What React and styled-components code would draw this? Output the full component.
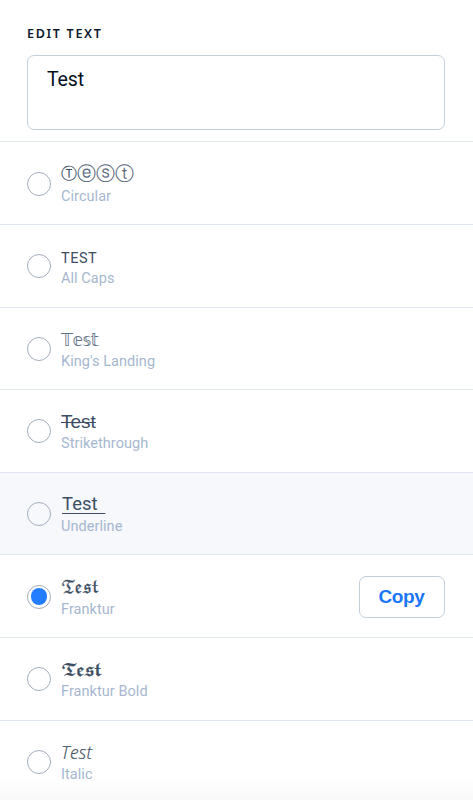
import React, { useState } from "react";
import styled, { createGlobalStyle, css } from "styled-components";

const GlobalStyle = createGlobalStyle`
  * {
    box-sizing: border-box;
  }

  body {
    margin: 0;
    background: #fff;
    font-family: Roboto, "Liberation Sans", sans-serif;
  }
`;

const Panel = styled.main`
  width: 100%;
  height: 800px;
  overflow: hidden;
  background: #fff;
`;

const Editor = styled.section`
  display: flex;
  flex-direction: column;
  height: 142.4px;
  padding: 25px 28.5px 0 27px;
  border-bottom: 1px solid #e0e8f2;
`;

const EditorLabel = styled.label`
  height: 30px;
  color: #0b1a2e;
  font-family: "Noto Sans", sans-serif;
  font-size: 12.5px;
  font-weight: 600;
  line-height: 17px;
  letter-spacing: 1.7px;
`;

const TextArea = styled.textarea`
  display: block;
  width: 100%;
  height: 74.5px;
  padding: 11px 19px;
  border: 1.5px solid #c4cfdc;
  border-radius: 7px;
  outline: none;
  resize: none;
  background: #fff;
  color: #06101f;
  font-family: Roboto, sans-serif;
  font-size: 19.5px;
  line-height: 25px;
  letter-spacing: -0.1px;
`;

const Row = styled.div`
  display: flex;
  align-items: center;
  height: 82.6px;
  padding: 1px 28.5px 0 27px;
  border-bottom: 1px solid #dfe6f1;
  background: ${(props) => (props.$hovered ? "#f6f8fc" : "transparent")};
`;

const List = styled.section`
  height: 658px;
  overflow: hidden;
  background: linear-gradient(#fff 635px, #f9f9f9 658px);
`;

const Radio = styled.button`
  display: grid;
  place-items: center;
  flex: none;
  width: 24px;
  height: 24px;
  margin-right: 10px;
  padding: 0;
  border: 1px solid #a3adbd;
  border-radius: 50%;
  background: #fff0;

  &::after {
    content: "";
    width: 16.5px;
    height: 16.5px;
    border-radius: 50%;
    background: ${(props) => (props.$checked ? "#247cff" : "transparent")};
  }
`;

const Texts = styled.div`
  flex: 1;
  padding-top: 2px;
  white-space: nowrap;
`;

const variants = {
  circular: css`
    font-family: "DejaVu Sans", sans-serif;
    font-size: 19px;
    line-height: 20px;
    color: #5d6b7e;

    /* the capital has a smaller, heavier ring */
    &::first-letter {
      color: #3c4e63;
      font-size: 15.5px;
      -webkit-text-stroke: 0.5px #3c4e63;
      vertical-align: 1px;
    }
  `,
  caps: css`
    padding-top: 3px;
    font-size: 14.5px;
    letter-spacing: 0.5px;
  `,
  double: css`
    padding-top: 1px;
    font-family: "DejaVu Sans", sans-serif;
    font-size: 17px;
    letter-spacing: -0.5px;
    color: #65758a;
  `,
  strike: css`
    padding-top: 1px;
    font-family: "Liberation Sans", sans-serif;
    text-decoration: line-through;
    text-decoration-thickness: 1px;
  `,
  underline: css`
    padding-left: 1px;
    font-size: 18.5px;
    text-decoration: underline;
    text-decoration-thickness: 1px;
    text-underline-offset: 3px;
    white-space: pre;
    word-spacing: -0.7px;
  `,
  fraktur: css`
    padding-top: 1px;
    font-family: "DejaVu Math TeX Gyre", "DejaVu Sans", serif;
    font-size: 16.5px;
    letter-spacing: -1.3px;
    -webkit-text-stroke: 0.3px #3c4e63;
  `,
  frakturBold: css`
    padding-top: 2px;
    font-family: "DejaVu Math TeX Gyre", "DejaVu Sans", serif;
    font-size: 16.5px;
    letter-spacing: -1.9px;
    -webkit-text-stroke: 0.2px #3c4e63;
  `,
  italic: css`
    font-family: "Open Sans", sans-serif;
    font-size: 17.5px;
    font-style: italic;
    font-weight: 300;
    letter-spacing: 0.3px;
    -webkit-text-stroke: 0.2px #3c4e63;
  `,
};

const Sample = styled.div`
  height: 22px;
  color: #3c4e63;
  font-size: 19px;
  line-height: 22px;
  ${(props) => variants[props.$variant]}
`;

const Caption = styled.div`
  height: 22px;
  color: #a6b7cf;
  font-size: 14.5px;
  line-height: 23px;
  letter-spacing: 0.05px;
`;

const CopyButton = styled.button`
  width: 86px;
  height: 42px;
  padding: 0;
  border: 1px solid #c3cedb;
  border-radius: 7px;
  background: #fff;
  color: #1976fa;
  font-family: "Liberation Sans", sans-serif;
  font-size: 19px;
  font-weight: 700;
  letter-spacing: -0.4px;
`;

const styles = [
  { name: "Circular", sample: "Ⓣⓔⓢⓣ", variant: "circular" },
  { name: "All Caps", sample: "TEST", variant: "caps" },
  { name: "King's Landing", sample: "𝕋𝕖𝕤𝕥", variant: "double" },
  { name: "Strikethrough", sample: "Test", variant: "strike" },
  { name: "Underline", sample: "Test  ", variant: "underline", hovered: true },
  { name: "Franktur", sample: "𝔗𝔢𝔰𝔱", variant: "fraktur" },
  { name: "Franktur Bold", sample: "𝕿𝖊𝖘𝖙", variant: "frakturBold" },
  { name: "Italic", sample: "Test", variant: "italic" },
];

function App() {
  const [text, setText] = useState("Test");
  const [selected, setSelected] = useState("Franktur");

  return (
    <Panel>
      <GlobalStyle />
      <Editor>
        <EditorLabel htmlFor="text">EDIT TEXT</EditorLabel>
        <TextArea
          id="text"
          spellCheck={false}
          value={text}
          onChange={(e) => setText(e.target.value)}
        />
      </Editor>
      <List>
        {styles.map((item) => (
          <Row key={item.name} $hovered={item.hovered}>
            <Radio
              aria-label={item.name}
              $checked={selected === item.name}
              onClick={() => setSelected(item.name)}
            />
            <Texts>
              <Sample $variant={item.variant}>{item.sample}</Sample>
              <Caption>{item.name}</Caption>
            </Texts>
            {selected === item.name && <CopyButton>Copy</CopyButton>}
          </Row>
        ))}
      </List>
    </Panel>
  );
}

export default App;
